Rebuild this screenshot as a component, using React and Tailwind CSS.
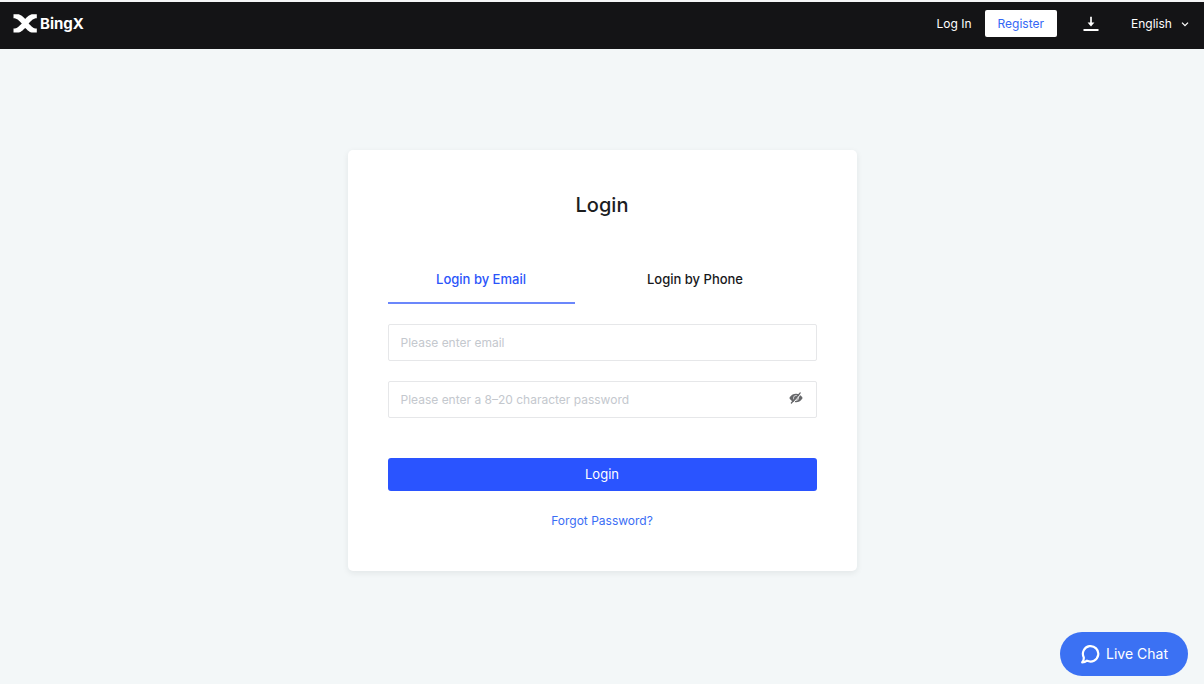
import React, { useState } from "react";

function LogoMark() {
  return (
    <svg viewBox="0 0 24 19" className="h-[19px] w-6" fill="#fff" aria-hidden="true">
      <path d="M0.5 0.3H4.4C8 0.3 9.8 2.8 12.2 4.9C14.6 2.8 16.4 0.3 20 0.3H23.8V4.3C20.2 4.3 18.2 6.9 15.6 9.4C18.2 11.9 20.2 14.5 23.8 14.5V18.5H20C16.4 18.5 14.6 16 12.2 13.9C9.8 16 8 18.5 4.4 18.5H0.5V14.5C4.2 14.5 6.2 11.9 8.8 9.4C6.2 6.9 4.2 4.3 0.5 4.3Z" />
    </svg>
  );
}

function DownloadIcon() {
  return (
    <svg viewBox="0 0 16 16" className="size-4" aria-hidden="true">
      <path d="M8 0.8V8" stroke="#fff" strokeWidth="1.7" fill="none" />
      <path d="M4.6 6.4H11.4L8 10.6Z" fill="#fff" />
      <path d="M1.2 14H14.8" stroke="#fff" strokeWidth="1.9" strokeLinecap="round" />
    </svg>
  );
}

function HiddenEyeIcon() {
  return (
    <svg viewBox="0 0 14 12" className="h-3 w-3.5" aria-hidden="true">
      <path d="M0.3 6C1.8 3.2 4.2 1.7 7 1.7S12.2 3.2 13.7 6C12.2 8.8 9.8 10.3 7 10.3S1.8 8.8 0.3 6Z" fill="#66676a" />
      <circle cx="7" cy="6" r="2.5" fill="none" stroke="#fff" strokeWidth="0.7" />
      <path d="M3.6 11.6L12.4 1.6" stroke="#fff" strokeWidth="1" />
      <path d="M2.4 11L11.2 0.9" stroke="#66676a" strokeWidth="1.3" strokeLinecap="round" />
    </svg>
  );
}

function ChatIcon() {
  return (
    <svg viewBox="0 0 20 20" className="size-5" fill="none" stroke="#fff" strokeWidth="2.2" strokeLinejoin="round" strokeLinecap="round" aria-hidden="true">
      <path d="M3.8 13.4A7.7 7.7 0 1 1 7 16.6C5.8 17.6 4.2 18.4 2.2 18.4C3.4 17.2 3.9 15.4 3.8 13.4Z" />
    </svg>
  );
}

function Header() {
  return (
    <header className="flex h-[49px] items-center justify-between border-t-2 border-[#f5f6f7] bg-[#141416] pr-3.5 pb-1 pl-[13px] text-[12px] text-white">
      <a href="#home" className="flex items-center gap-[3px]">
        <LogoMark />
        <span className="text-[15px] leading-5 font-bold">BingX</span>
      </a>
      <nav className="flex items-center">
        <a href="#login">Log In</a>
        <a href="#register" className="ml-[13px] rounded-xs bg-white px-[13px] py-1 leading-[19px] text-[#3467f5]">
          Register
        </a>
        <a href="#download" aria-label="Download" className="ml-[26px]">
          <DownloadIcon />
        </a>
        <label className="ml-8 flex items-center gap-2">
          <select aria-label="Language" className="appearance-none bg-transparent leading-5 outline-none">
            <option>English</option>
          </select>
          <svg viewBox="0 0 10 10" className="size-2.5" fill="none" stroke="#fff" strokeWidth="1.3" aria-hidden="true">
            <path d="M2 3.6L5 6.6L8 3.6" />
          </svg>
        </label>
      </nav>
    </header>
  );
}

const tabs = ["Login by Email", "Login by Phone"];

export default function App() {
  const [active, setActive] = useState(0);
  const [visible, setVisible] = useState(false);

  return (
    <div className="flex min-h-screen flex-col border-b-2 border-white bg-[#f3f7f8] font-['Inter','Liberation_Sans',sans-serif]">
      <Header />
      <main className="flex flex-1 items-start justify-center px-4 pt-[101px]">
        <form
          onSubmit={(e) => e.preventDefault()}
          className="w-full max-w-[509px] rounded-[5px] bg-white p-10 shadow-[0_2px_6px_rgba(20,40,40,0.08)]"
        >
          <h1 className="text-center text-xl leading-[30px] font-medium text-[#1c1d1f]">Login</h1>
          <div role="tablist" className="mt-12 flex gap-[27px]">
            {tabs.map((tab, i) => (
              <button
                key={tab}
                type="button"
                role="tab"
                aria-selected={active === i}
                onClick={() => setActive(i)}
                className={
                  active === i
                    ? "w-[187px] border-b-2 border-[#6b87fb] pb-3 text-[13px] leading-[22px] font-medium text-[#2b55fa]"
                    : "w-[187px] border-b-2 border-transparent pb-3 text-[13px] leading-[22px] font-medium text-[#18191b]"
                }
              >
                {tab}
              </button>
            ))}
          </div>
          <input
            type="text"
            aria-label="Email"
            placeholder="Please enter email"
            className="mt-5 block h-[37px] w-full rounded-xs border border-[#e6e7e9] px-3 text-[12px] outline-none placeholder:text-[#c4c8ce]"
          />
          <div className="mt-5 flex h-[37px] items-center rounded-xs border border-[#e6e7e9] pr-[13px]">
            <input
              type={visible ? "text" : "password"}
              aria-label="Password"
              placeholder="Please enter a 8–20 character password"
              className="h-full min-w-0 flex-1 px-3 text-[12px] outline-none placeholder:text-[#c4c8ce]"
            />
            <button type="button" aria-label="Show password" className="pb-1" onClick={() => setVisible(!visible)}>
              <HiddenEyeIcon />
            </button>
          </div>
          <button type="submit" className="mt-10 block h-[33px] w-full rounded-[3px] bg-[#2a54ff] text-[13px] text-white">
            Login
          </button>
          <div className="mt-5 text-center text-[12px] leading-5">
            <a href="#forgot" className="text-[#3a6df5]">Forgot Password?</a>
          </div>
        </form>
      </main>
      <button
        type="button"
        className="fixed right-4 bottom-2.5 flex h-11 items-center gap-1.5 rounded-full bg-[#3b71f3] px-5 text-sm text-white"
      >
        <ChatIcon />
        Live Chat
      </button>
    </div>
  );
}
